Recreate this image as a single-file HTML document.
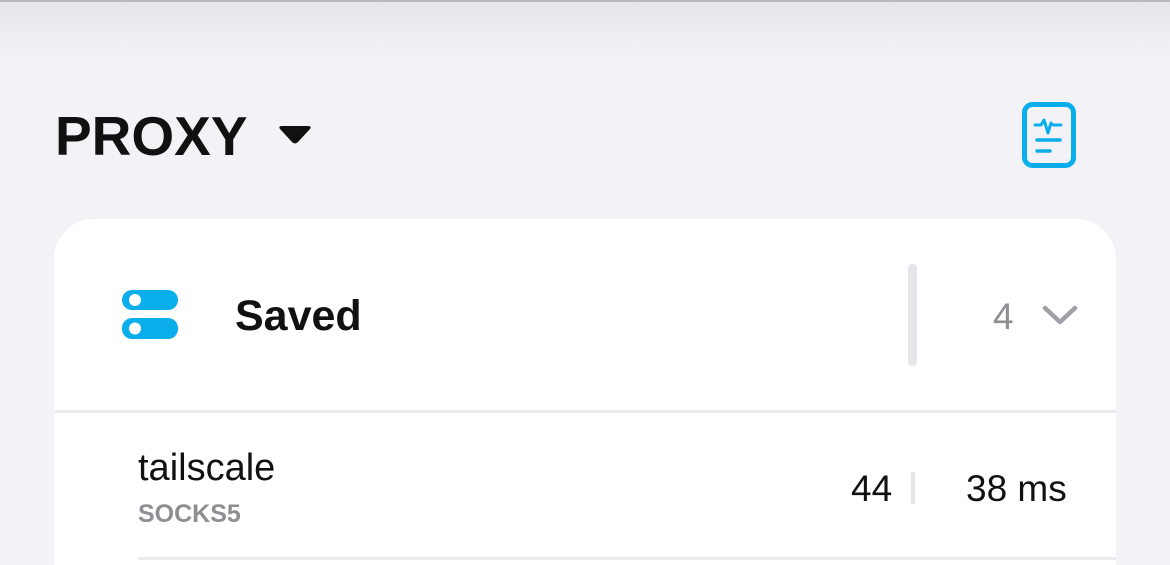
<!DOCTYPE html>
<html><head><style>
html,body{margin:0;width:1170px;height:565px;overflow:hidden}
body{background:#f2f2f7;font-family:"Liberation Sans",sans-serif;position:relative}
.top{position:absolute;left:0;top:0;width:1170px;height:60px;background:linear-gradient(#e6e6eb,#f2f2f7);border-top:2px solid #b9b9be;box-sizing:border-box}
.t{position:absolute;white-space:nowrap}
.card{position:absolute;left:54px;top:219px;width:1062px;height:346px;background:#fff;border-radius:40px 40px 0 0}
</style></head><body>
<div class="top"></div>
<div class="t" style="left:55px;top:104px;font-size:55px;font-weight:bold;color:#111">PROXY</div>
<svg class="t" style="left:278px;top:126px" width="34" height="20"><path d="M2 3 Q0 0 4 0 H30 Q34 0 32 3 L20 16 Q17 19 14 16 Z" fill="#111"/></svg>
<svg class="t" style="left:1020px;top:100px" width="58" height="70"><rect x="4.5" y="4.5" width="49" height="61" rx="8" fill="none" stroke="#0aaeea" stroke-width="5"/><path d="M15 25 H21 L24 20 L28 33 L31 23 L33 25 H41" fill="none" stroke="#0aaeea" stroke-width="3" stroke-linejoin="round" stroke-linecap="round"/><path d="M17 40 H40 M17 51 H30" stroke="#0aaeea" stroke-width="3.5" stroke-linecap="round"/></svg>
<div class="card"></div>
<svg class="t" style="left:121px;top:289px" width="58" height="52"><rect x="1" y="1" width="56" height="20" rx="10" fill="#0aaeea"/><rect x="1" y="29" width="56" height="21" rx="10" fill="#0aaeea"/><circle cx="14" cy="11" r="6" fill="#fff"/><circle cx="14" cy="39.5" r="6" fill="#fff"/></svg>
<div class="t" style="left:235px;top:292px;font-size:43px;font-weight:bold;color:#111">Saved</div>
<div class="t" style="left:908px;top:264px;width:9px;height:102px;background:#e5e5ea;border-radius:4px"></div>
<div class="t" style="left:993px;top:296px;font-size:37px;color:#8e8e93">4</div>
<svg class="t" style="left:1042px;top:304px" width="36" height="22"><path d="M3 4 L18 18 L33 4" fill="none" stroke="#a0a0a6" stroke-width="4.5" stroke-linecap="round" stroke-linejoin="round"/></svg>
<div class="t" style="left:54px;top:410px;width:1062px;height:3px;background:#ececf0"></div>
<div class="t" style="left:138px;top:447px;font-size:38px;color:#111">tailscale</div>
<div class="t" style="left:138px;top:500px;font-size:25px;font-weight:bold;color:#8e8e93">SOCKS5</div>
<div class="t" style="left:851px;top:468px;font-size:37px;color:#111">44</div>
<div class="t" style="left:911px;top:472px;width:4px;height:32px;background:#e5e5ea"></div>
<div class="t" style="left:966px;top:468px;font-size:37px;color:#111">38 ms</div>
<div class="t" style="left:138px;top:557px;width:978px;height:3px;background:#ececf0"></div>
</body></html>
